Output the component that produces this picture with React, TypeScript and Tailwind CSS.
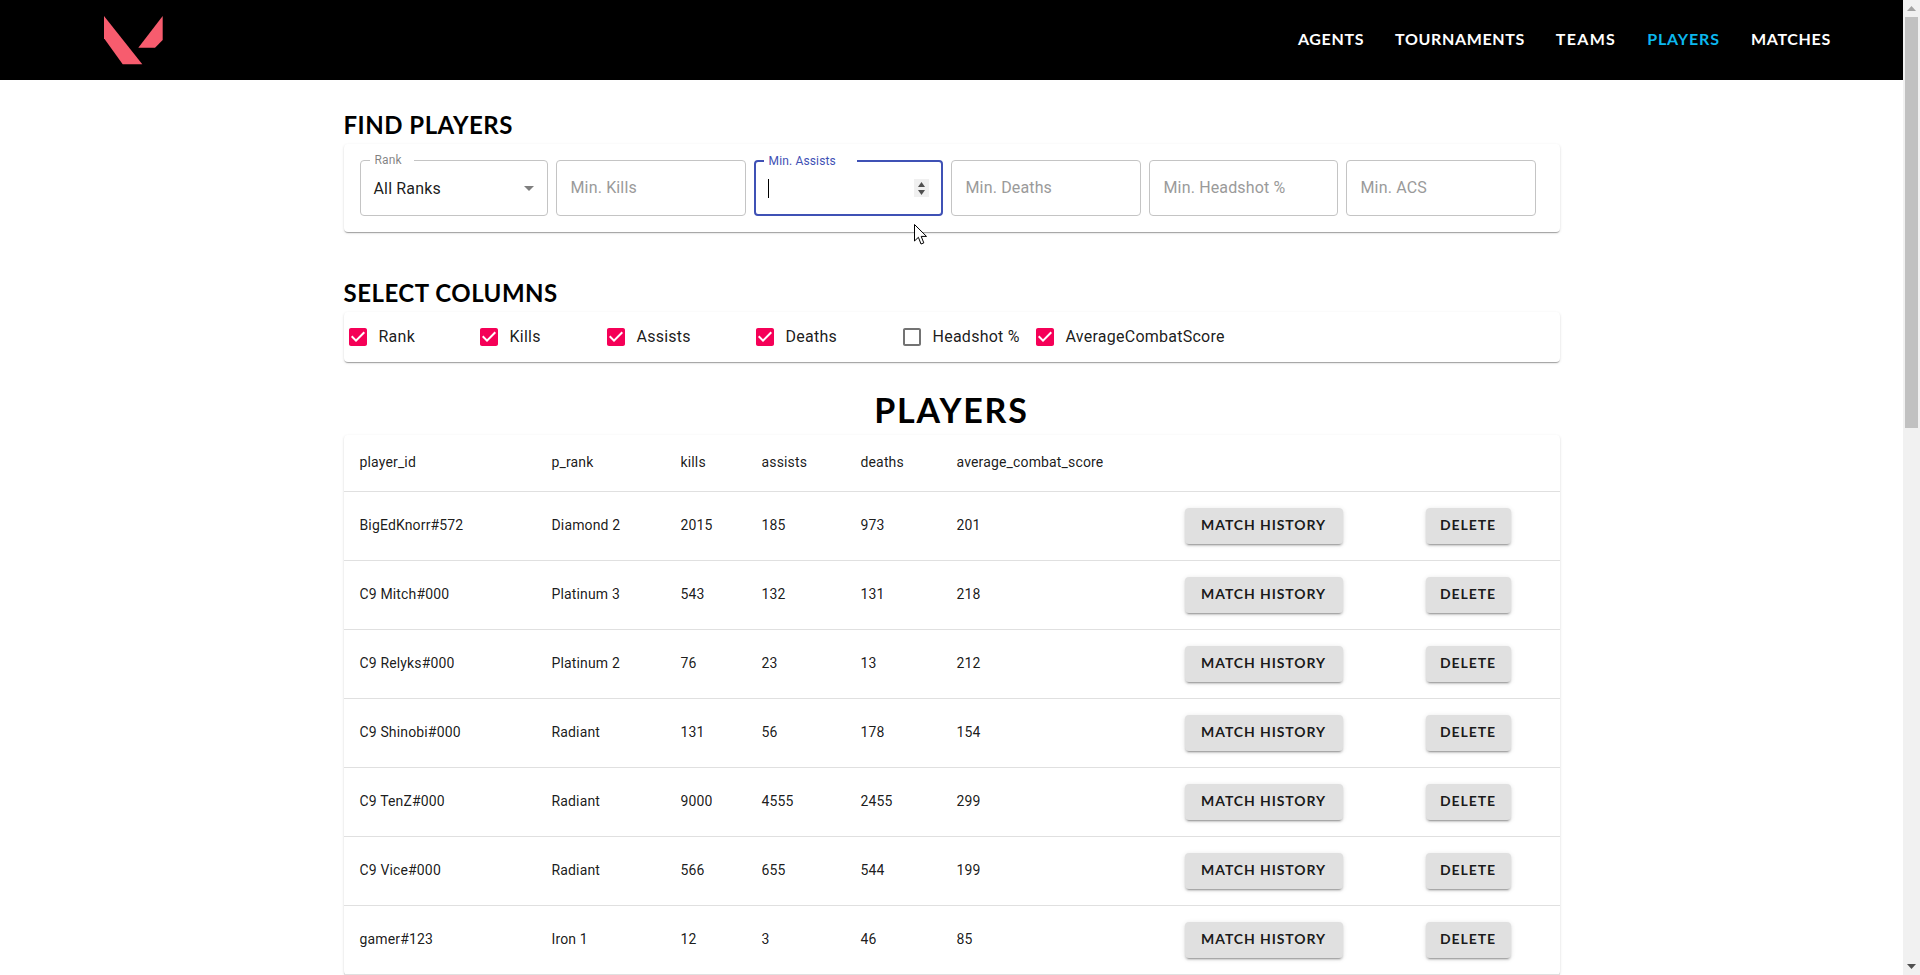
import React from "react";

const NAV_ITEMS = [
  { label: "AGENTS", active: false, tracking: "tracking-[0.64px]" },
  { label: "TOURNAMENTS", active: false, tracking: "tracking-[0.64px]" },
  { label: "TEAMS", active: false, tracking: "tracking-[1.3px]" },
  { label: "PLAYERS", active: true, tracking: "tracking-[0.85px]" },
  { label: "MATCHES", active: false, tracking: "tracking-[0.7px]" },
];

const COLUMN_OPTIONS = [
  { label: "Rank", checked: true, width: "w-[131px]" },
  { label: "Kills", checked: true, width: "w-[127px]" },
  { label: "Assists", checked: true, width: "w-[149px]" },
  { label: "Deaths", checked: true, width: "w-[147px]" },
  { label: "Headshot %", checked: false, width: "w-[133px]" },
  { label: "AverageCombatScore", checked: true, width: "w-[200px]" },
];

const HEADERS = ["player_id", "p_rank", "kills", "assists", "deaths", "average_combat_score"];

const PLAYERS = [
  ["BigEdKnorr#572", "Diamond 2", "2015", "185", "973", "201"],
  ["C9 Mitch#000", "Platinum 3", "543", "132", "131", "218"],
  ["C9 Relyks#000", "Platinum 2", "76", "23", "13", "212"],
  ["C9 Shinobi#000", "Radiant", "131", "56", "178", "154"],
  ["C9 TenZ#000", "Radiant", "9000", "4555", "2455", "299"],
  ["C9 Vice#000", "Radiant", "566", "655", "544", "199"],
  ["gamer#123", "Iron 1", "12", "3", "46", "85"],
];

const paperShadow =
  "shadow-[0_2px_1px_-1px_rgba(0,0,0,0.2),0_1px_1px_0_rgba(0,0,0,0.14),0_1px_3px_0_rgba(0,0,0,0.12)]";
const headingFont = "font-['Lato',sans-serif] font-bold text-black";

function Logo() {
  return (
    <svg width="59" height="49" viewBox="0 0 59 49" className="block">
      <path d="M0 0V22.3L18.7 48.3H38.3Z" fill="#f75c6e" />
      <path d="M58.7 0V24L51 31.7H34.3Z" fill="#f75c6e" />
    </svg>
  );
}

function TextField({ placeholder, width }: { placeholder: string; width: string }) {
  return (
    <input
      readOnly
      placeholder={placeholder}
      className={`h-14 shrink-0 rounded border border-[#c4c4c4] bg-white px-[14px] pb-[2px] text-base text-black/90 outline-none placeholder:text-[#9a9a9a] ${width}`}
    />
  );
}

function RankSelect() {
  return (
    <div className="relative flex h-14 w-[188px] shrink-0 items-center rounded border border-[#c4c4c4] px-[13px] pt-[1px] text-base text-black/90">
      <span className="absolute -top-[9px] left-[9px] w-[44px] bg-white pl-[5px] text-xs leading-4 text-black/50">Rank</span>
      All Ranks
      <svg width="24" height="24" viewBox="0 0 24 24" className="absolute left-[156px] top-[15px] fill-black/50">
        <path d="M7 10l5 5 5-5z" />
      </svg>
    </div>
  );
}

function FocusedField() {
  return (
    <div className="relative flex h-14 w-[189px] shrink-0 items-center rounded border-2 border-[#3f51b5] px-[12px]">
      <span className="absolute -top-[9px] left-[8px] w-[93px] bg-white pl-[5px] text-xs leading-4 text-[#3f51b5]">Min. Assists</span>
      <span className="h-[19px] w-px bg-black" />
      <div className="absolute right-[12px] top-[17px] flex h-[18px] w-[15px] flex-col items-center justify-center gap-[3px] bg-[#f0f0f0]">
        <svg width="7" height="5" viewBox="0 0 7 5" className="fill-[#505050]"><path d="M3.5 0L7 5H0Z" /></svg>
        <svg width="7" height="5" viewBox="0 0 7 5" className="fill-[#505050]"><path d="M0 0H7L3.5 5Z" /></svg>
      </div>
    </div>
  );
}

function ColumnCheck({ label, checked, width }: { label: string; checked: boolean; width: string }) {
  return (
    <label className={`flex shrink-0 items-center gap-[12px] ${width}`}>
      <svg width="24" height="24" viewBox="0 0 24 24" className={`-mx-[3px] shrink-0 ${checked ? "fill-[#f50057]" : "fill-black/55"}`}>
        {checked ? (
          <path d="M19 3H5c-1.11 0-2 .9-2 2v14c0 1.1.89 2 2 2h14c1.1 0 2-.9 2-2V5c0-1.1-.9-2-2-2zm-9 14l-5-5 1.41-1.41L10 14.17l7.59-7.59L19 8l-9 9z" />
        ) : (
          <path d="M19 5v14H5V5h14m0-2H5c-1.1 0-2 .9-2 2v14c0 1.1.9 2 2 2h14c1.1 0 2-.9 2-2V5c0-1.1-.9-2-2-2z" />
        )}
      </svg>
      <span className="whitespace-nowrap text-base tracking-[0.25px] text-black/90">{label}</span>
    </label>
  );
}

function ActionButton({ label, width }: { label: string; width: string }) {
  return (
    <button
      className={`block h-9 rounded bg-[#e0e0e0] pb-[3px] font-['Lato',sans-serif] text-sm font-bold tracking-[0.9px] text-black/90 shadow-[0_3px_1px_-2px_rgba(0,0,0,0.2),0_2px_2px_0_rgba(0,0,0,0.14),0_1px_5px_0_rgba(0,0,0,0.12)] ${width}`}
    >
      {label}
    </button>
  );
}

export default function App() {
  return (
    <div className="relative flex h-screen overflow-hidden bg-white font-['Roboto',sans-serif] tracking-[0.15px]">
      <div className="min-w-0 flex-1 overflow-hidden">
        <nav className="flex h-20 items-center justify-between bg-black pl-[104px] pr-[72px]">
          <Logo />
          <ul className="flex gap-[31px] pb-[2px]">
            {NAV_ITEMS.map((item) => (
              <li
                key={item.label}
                className={`font-['Lato',sans-serif] text-base font-bold ${item.tracking} ${item.active ? "text-[#0cb7ee]" : "text-white"}`}
              >
                {item.label}
              </li>
            ))}
          </ul>
        </nav>

        <main className="mx-auto w-[1216px]">
          <h3 className={`mb-[2px] mt-[27px] h-[35px] text-2xl leading-[35px] tracking-[0.5px] ${headingFont}`}>FIND PLAYERS</h3>
          <section className={`flex gap-2 rounded bg-white pb-4 pl-4 pr-6 pt-4 ${paperShadow}`}>
            <RankSelect />
            <TextField placeholder="Min. Kills" width="w-[190px]" />
            <FocusedField />
            <TextField placeholder="Min. Deaths" width="w-[190px]" />
            <TextField placeholder="Min. Headshot %" width="w-[189px]" />
            <TextField placeholder="Min. ACS" width="w-[190px]" />
          </section>

          <h3 className={`mb-[2px] mt-[43px] h-[35px] text-2xl leading-[35px] tracking-[0.5px] ${headingFont}`}>SELECT COLUMNS</h3>
          <section className={`flex h-[50px] items-center rounded bg-white pl-[5px] ${paperShadow}`}>
            {COLUMN_OPTIONS.map((option) => (
              <ColumnCheck key={option.label} {...option} />
            ))}
          </section>

          <h2 className={`mb-[2px] mt-[25px] h-[46px] text-center text-[34px] leading-[46px] tracking-[1.8px] ${headingFont}`}>PLAYERS</h2>
          <section className={`rounded bg-white ${paperShadow}`}>
            <table className="w-full table-fixed border-collapse text-left text-sm text-black/90">
              <colgroup>
                <col className="w-[192px]" />
                <col className="w-[129px]" />
                <col className="w-[81px]" />
                <col className="w-[99px]" />
                <col className="w-[96px]" />
                <col className="w-[228px]" />
                <col className="w-[241px]" />
                <col className="w-[150px]" />
              </colgroup>
              <thead>
                <tr className="border-b border-[#e0e0e0]">
                  {HEADERS.map((header) => (
                    <th key={header} className="px-4 pb-[17px] pt-[15px] font-normal leading-6">
                      {header}
                    </th>
                  ))}
                  <th className="p-4" />
                  <th className="p-4" />
                </tr>
              </thead>
              <tbody>
                {PLAYERS.map((row) => (
                  <tr key={row[0]} className="border-b border-[#e0e0e0]">
                    {row.map((cell, i) => (
                      <td key={i} className="px-4 pb-[17px] pt-[15px] leading-5">
                        {cell}
                      </td>
                    ))}
                    <td className="p-4">
                      <ActionButton label="MATCH HISTORY" width="w-[158px]" />
                    </td>
                    <td className="p-4">
                      <ActionButton label="DELETE" width="w-[85px]" />
                    </td>
                  </tr>
                ))}
              </tbody>
            </table>
          </section>
        </main>
      </div>

      {/* page scrollbar */}
      <div className="flex w-[17px] shrink-0 flex-col items-center justify-between bg-[#f1f1f1]">
        <div className="flex h-[17px] w-full items-center justify-center">
          <svg width="9" height="5" viewBox="0 0 9 5" className="fill-[#a3a3a3]"><path d="M4.5 0L9 5H0Z" /></svg>
        </div>
        <div className="mb-auto h-[411px] w-[13px] bg-[#c1c1c1]" />
        <div className="flex h-[17px] w-full items-center justify-center">
          <svg width="9" height="5" viewBox="0 0 9 5" className="fill-[#505050]"><path d="M0 0H9L4.5 5Z" /></svg>
        </div>
      </div>

      {/* mouse pointer */}
      <svg width="13" height="22" viewBox="0 0 13 22" className="absolute left-[914px] top-[224px]">
        <path d="M.5.5V17L4.4 13.3 7 20 9.8 18.9 7.2 12.4H12.5Z" fill="#fff" stroke="#000" strokeWidth="1" />
      </svg>
    </div>
  );
}
